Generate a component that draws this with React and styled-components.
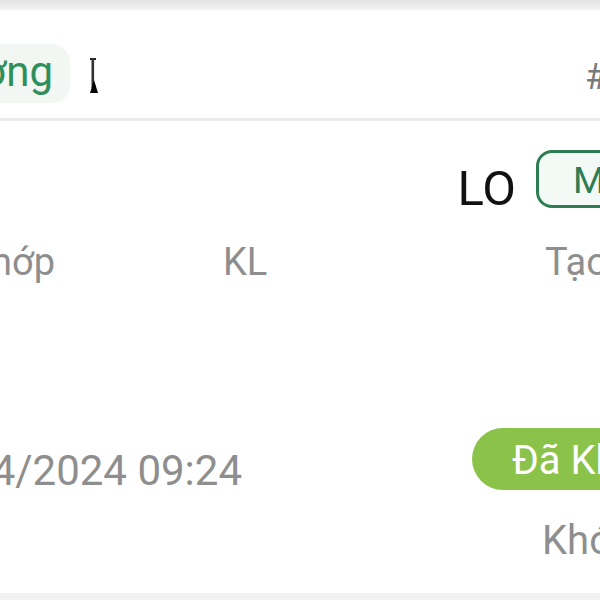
import React from "react";
import styled, { createGlobalStyle } from "styled-components";

const GlobalStyle = createGlobalStyle`
  html, body {
    margin: 0;
    padding: 0;
    background: #eeeeee;
    overflow: hidden;
    font-family: Roboto, "Noto Sans", "Liberation Sans", sans-serif;
  }
`;

const Screen = styled.div`
  width: 600px;
  height: 600px;
  overflow: hidden;
  background: linear-gradient(#e4e4e4 0px, #f2f2f2 10px, #f2f2f2 100%);
`;

const Card = styled.div`
  margin-top: 10px;
  height: 583px;
  background: #ffffff;
  display: flex;
  flex-direction: column;
`;

const Header = styled.div`
  height: 111px;
  box-sizing: border-box;
  padding-top: 34px;
  display: flex;
  align-items: flex-start;
  border-bottom: 3px solid #ebebeb;
`;

const TagSlot = styled.div`
  width: 70px;
  flex-shrink: 0;
  display: flex;
  justify-content: flex-end;
`;

const Tag = styled.span`
  flex-shrink: 0;
  height: 59px;
  box-sizing: border-box;
  padding: 0 17px 4px 22px;
  display: flex;
  align-items: center;
  border-radius: 18px;
  background: #f2f7f4;
  color: #2f8f5b;
  font-size: 42px;
  line-height: 1;
  white-space: nowrap;
`;

const Caret = styled.svg`
  margin: 14px 0 0 20px;
  flex-shrink: 0;
`;

const Hash = styled.span`
  margin: 15px 0 0 auto;
  width: 15px;
  flex-shrink: 0;
  color: #7a7a7a;
  font-size: 36px;
  line-height: 1;
  white-space: nowrap;
`;

const TitleRow = styled.div`
  margin-top: 29px;
  display: flex;
  justify-content: flex-end;
  align-items: flex-start;
  gap: 20px;
`;

const Code = styled.span`
  margin-top: 14px;
  color: #111111;
  font-size: 49px;
  line-height: 1;
`;

const SideBadge = styled.span`
  flex-shrink: 0;
  width: 150px;
  height: 58px;
  margin-right: -86px;
  box-sizing: border-box;
  padding: 2px 0 0 34px;
  display: flex;
  align-items: center;
  border: 3px solid #2e7d52;
  border-radius: 16px;
  background: #f3faf6;
  color: #2e7d52;
  font-size: 37px;
  line-height: 1;
`;

const InfoGrid = styled.div`
  margin-top: 30px;
  display: grid;
  grid-template-columns: 223px 322px 1fr;
`;

const LabelSlot = styled.div`
  width: ${(p) => p.$edge || "auto"};
  display: flex;
  justify-content: ${(p) => (p.$edge ? "flex-end" : "flex-start")};
`;

const Label = styled.span`
  flex-shrink: 0;
  color: #8e8e8e;
  font-size: 38px;
  line-height: 1;
  white-space: nowrap;
`;

const StatusRow = styled.div`
  margin-top: 147px;
  display: flex;
  align-items: flex-start;
`;

const DateSlot = styled.div`
  width: 242px;
  flex-shrink: 0;
  display: flex;
  justify-content: flex-end;
  margin-top: 22px;
`;

const DateText = styled.span`
  flex-shrink: 0;
  color: #8e8e8e;
  font-size: 42px;
  line-height: 1;
  white-space: nowrap;
`;

const Pill = styled.span`
  margin: 0 -90px 0 auto;
  flex-shrink: 0;
  width: 218px;
  height: 62px;
  box-sizing: border-box;
  padding: 4px 0 0 40px;
  display: flex;
  align-items: center;
  border-radius: 31px;
  background: #8bc34a;
  color: #ffffff;
  font-size: 40px;
  line-height: 1;
  white-space: nowrap;
`;

const NoteRow = styled.div`
  margin-top: 29px;
  padding-left: 542px;
  display: flex;
`;

const Note = styled.span`
  flex-shrink: 0;
  color: #8e8e8e;
  font-size: 40px;
  line-height: 1;
  white-space: nowrap;
`;

export default function App() {
  return (
    <>
      <GlobalStyle />
      <Screen>
        <Card>
          <Header>
            <TagSlot>
              <Tag>Thị trường</Tag>
            </TagSlot>
            <Caret width="10" height="36" viewBox="0 0 10 36">
              <rect x="0" y="0" width="6" height="2" fill="#222" />
              <rect x="1.5" y="0" width="2.6" height="30" fill="#333" />
              <polygon points="0,35 8,35 4,22" fill="#000" />
            </Caret>
            <Hash>#10245</Hash>
          </Header>

          <TitleRow>
            <Code>LO</Code>
            <SideBadge>MUA</SideBadge>
          </TitleRow>

          <InfoGrid>
            <LabelSlot $edge="55px">
              <Label>Giá khớp</Label>
            </LabelSlot>
            <LabelSlot>
              <Label>KL</Label>
            </LabelSlot>
            <LabelSlot>
              <Label>Tạo lúc</Label>
            </LabelSlot>
          </InfoGrid>

          <StatusRow>
            <DateSlot>
              <DateText>12/04/2024 09:24</DateText>
            </DateSlot>
            <Pill>Đã Khớp</Pill>
          </StatusRow>

          <NoteRow>
            <Note>Khóa</Note>
          </NoteRow>
        </Card>
      </Screen>
    </>
  );
}
